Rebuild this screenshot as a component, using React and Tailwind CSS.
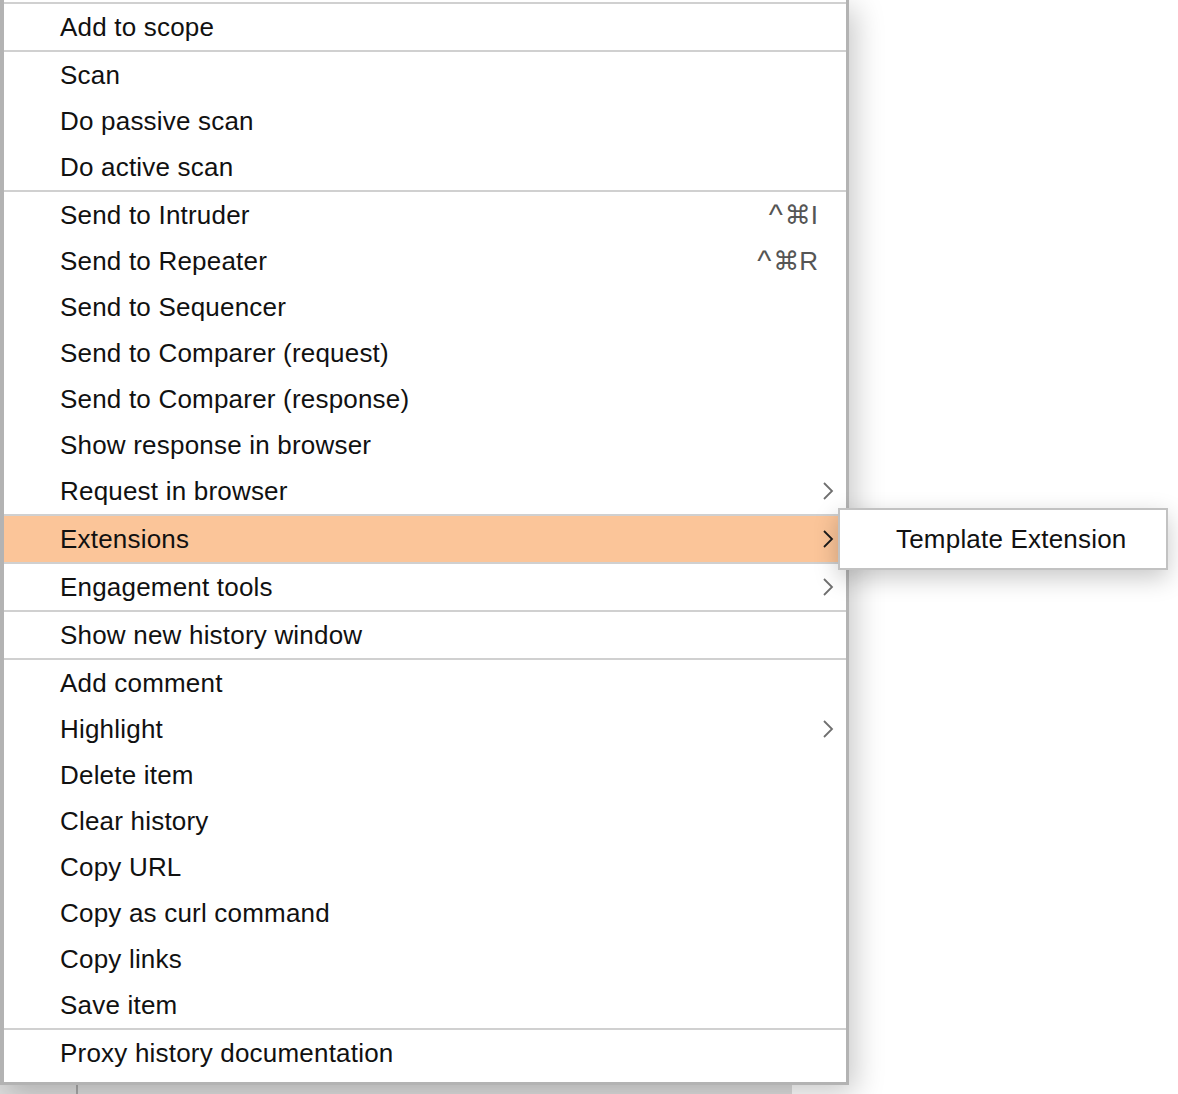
const groups = [
  [{ label: "Add to scope" }],
  [{ label: "Scan" }, { label: "Do passive scan" }, { label: "Do active scan" }],
  [
    { label: "Send to Intruder", shortcut: "I" },
    { label: "Send to Repeater", shortcut: "R" },
    { label: "Send to Sequencer" },
    { label: "Send to Comparer (request)" },
    { label: "Send to Comparer (response)" },
    { label: "Show response in browser" },
    { label: "Request in browser", submenu: true },
  ],
  [{ label: "Extensions", submenu: true, active: true }],
  [{ label: "Engagement tools", submenu: true }],
  [{ label: "Show new history window" }],
  [
    { label: "Add comment" },
    { label: "Highlight", submenu: true },
    { label: "Delete item" },
    { label: "Clear history" },
    { label: "Copy URL" },
    { label: "Copy as curl command" },
    { label: "Copy links" },
    { label: "Save item" },
  ],
  [{ label: "Proxy history documentation" }],
];

const Chevron = ({ dark }) => (
  <svg width="12" height="20" viewBox="0 0 12 20" className="absolute right-[12px]">
    <path
      d="M2 2 L10 10 L2 18"
      fill="none"
      stroke={dark ? "#1a1a1a" : "#6f6f6f"}
      strokeWidth="1.8"
    />
  </svg>
);

const MenuRow = ({ item }) => (
  <div
    className={`relative flex h-[46px] items-center pl-[56px] pr-[28px] ${
      item.active ? "bg-[#fbc599]" : ""
    }`}
  >
    <span className="flex-1 text-[26px] leading-[26px] tracking-[0.2px] text-[#111]">
      {item.label}
    </span>
    {item.shortcut && (
      <span className="flex items-center text-[26px] leading-[26px] text-[#555]">
        <span className="mr-[2px] text-[30px]">^</span>
        <span style={{ fontFamily: '"DejaVu Sans", sans-serif' }}>⌘</span>
        <span>{item.shortcut}</span>
      </span>
    )}
    {item.submenu && <Chevron dark={item.active} />}
  </div>
);

export default function App() {
  return (
    <div
      className="relative h-[1094px] w-[1178px] overflow-hidden bg-white"
      style={{ fontFamily: '"Liberation Sans", Arial, sans-serif' }}
    >
      {/* what lies under the menu */}
      <div className="absolute bottom-0 left-0 flex h-[12px] w-[792px] bg-[#dedede]">
        <div className="ml-[76px] h-full w-[2px] bg-[#a9a9a9]" />
      </div>

      {/* context menu */}
      <div className="absolute left-0 top-0 z-10 w-[849px] border-b-[3px] border-l-4 border-r-[3px] border-[#b3b3b3] bg-white pb-[6px] pt-[2px] shadow-[6px_8px_28px_rgba(0,0,0,0.22)]">
        {groups.map((group, gi) => (
          <div key={gi} className="border-t-2 border-[#d0d0d0]">
            {group.map((item) => (
              <MenuRow key={item.label} item={item} />
            ))}
          </div>
        ))}
      </div>

      {/* submenu */}
      <div className="absolute left-[838px] top-[508px] z-20 flex h-[62px] w-[330px] items-center border-2 border-[#c2c2c2] bg-white pl-[56px] shadow-[0_8px_24px_rgba(0,0,0,0.22)]">
        <span className="text-[26px] leading-[26px] tracking-[0.2px] text-[#111]">
          Template Extension
        </span>
      </div>
    </div>
  );
}
